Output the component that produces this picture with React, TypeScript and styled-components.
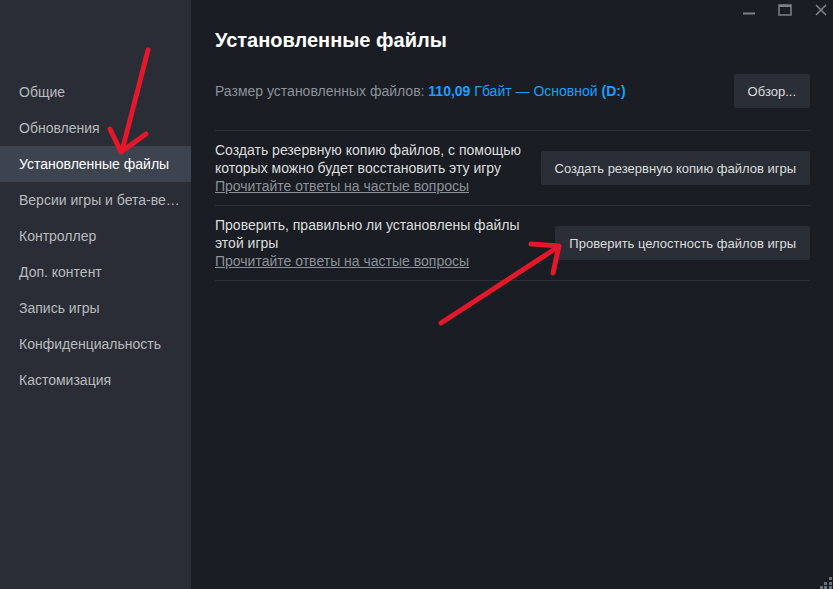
import React from 'react';
import styled, { createGlobalStyle } from 'styled-components';

const GlobalStyle = createGlobalStyle`
    html, body {
        margin: 0;
        padding: 0;
        background: #1a1d23;
    }
    body {
        font-family: "Liberation Sans", Arial, sans-serif;
    }
`;

const menuItems = [
    'Общие',
    'Обновления',
    'Установленные файлы',
    'Версии игры и бета-версии',
    'Контроллер',
    'Доп. контент',
    'Запись игры',
    'Конфиденциальность',
    'Кастомизация',
];

const App = () => {
    return (
        <Window>
            <GlobalStyle />
            <Sidebar>
                {menuItems.map((item) => (
                    <MenuItem key={item} active={item === 'Установленные файлы'}>
                        {item}
                    </MenuItem>
                ))}
            </Sidebar>

            <Main>
                <Title>Установленные файлы</Title>

                <SizeRow>
                    <SizeText>
                        Размер установленных файлов:{' '}
                        <Accent>
                            <b>110,09</b> Гбайт — Основной <b>(D:)</b>
                        </Accent>
                    </SizeText>
                    <Button>Обзор...</Button>
                </SizeRow>

                <Row>
                    <Description>
                        Создать резервную копию файлов, с помощью которых можно будет восстановить эту игру
                        <Link>Прочитайте ответы на частые вопросы</Link>
                    </Description>
                    <Button>Создать резервную копию файлов игры</Button>
                </Row>

                <Row>
                    <Description>
                        Проверить, правильно ли установлены файлы этой игры
                        <Link>Прочитайте ответы на частые вопросы</Link>
                    </Description>
                    <Button>Проверить целостность файлов игры</Button>
                </Row>
            </Main>

            <Controls>
                <svg width="14" height="14" viewBox="0 0 14 14">
                    <line x1="1" y1="10.5" x2="13" y2="10.5" stroke="#7b818a" strokeWidth="2" />
                </svg>
                <svg width="14" height="14" viewBox="0 0 14 14">
                    <rect x="1" y="2" width="12" height="10" fill="none" stroke="#7b818a" strokeWidth="1.5" />
                    <line x1="1" y1="3" x2="13" y2="3" stroke="#7b818a" strokeWidth="2" />
                </svg>
                <svg width="14" height="14" viewBox="0 0 14 14">
                    <path d="M2 2 L12 12 M12 2 L2 12" stroke="#7b818a" strokeWidth="1.6" />
                </svg>
            </Controls>

            <Grip>
                <svg width="12" height="12" viewBox="0 0 12 12">
                    <rect x="9" y="0" width="3" height="3" fill="#6b717a" />
                    <rect x="4" y="5" width="3" height="3" fill="#6b717a" />
                    <rect x="9" y="5" width="3" height="3" fill="#6b717a" />
                    <rect x="0" y="9" width="3" height="3" fill="#6b717a" />
                    <rect x="4" y="9" width="3" height="3" fill="#6b717a" />
                    <rect x="9" y="9" width="3" height="3" fill="#6b717a" />
                </svg>
            </Grip>

            <Annotations width="833" height="589" viewBox="0 0 833 589">
                <g stroke="#e4172b" strokeWidth="5" strokeLinecap="round" fill="none">
                    <path d="M148 50 L122 151" />
                    <path d="M110 129 L121 152 L146 134" strokeLinejoin="round" />
                    <path d="M441 323 L558 247" />
                    <path d="M531 244 L559 246 L553 273" strokeLinejoin="round" />
                </g>
            </Annotations>
        </Window>
    );
};

export default App;

const Window = styled.div`
    position: relative;
    display: flex;
    width: 833px;
    height: 589px;
    overflow: hidden;
    background-color: #1a1d23;
`;

const Sidebar = styled.div`
    width: 191px;
    flex-shrink: 0;
    padding-top: 74px;
    background-color: #2a2d35;
    box-sizing: border-box;
`;

const MenuItem = styled.div<{ active?: boolean }>`
    height: 36px;
    line-height: 36px;
    padding: 0 10px 0 19px;
    font-size: 14px;
    color: ${(p) => (p.active ? '#ffffff' : '#b8bcbf')};
    background-color: ${(p) => (p.active ? '#3d4450' : 'transparent')};
    white-space: nowrap;
    overflow: hidden;
    text-overflow: ellipsis;
`;

const Main = styled.div`
    flex: 1;
    padding: 29px 23px 0 24px;
    display: flex;
    flex-direction: column;
`;

const Title = styled.h1`
    margin: 0 0 22px;
    font-size: 20px;
    font-weight: bold;
    color: #ffffff;
`;

const SizeRow = styled.div`
    display: flex;
    align-items: center;
    justify-content: space-between;
    padding-bottom: 22px;
    border-bottom: 1px solid #2c3038;
`;

const SizeText = styled.div`
    font-size: 14px;
    color: #8b929a;
`;

const Accent = styled.span`
    color: #1a9fff;

    b {
        font-weight: bold;
    }
`;

const Row = styled.div`
    display: flex;
    align-items: center;
    justify-content: space-between;
    padding: 10px 0 10px;
    border-bottom: 1px solid #2c3038;
`;

const Description = styled.div`
    width: 320px;
    font-size: 14px;
    line-height: 18px;
    color: #dcdedf;
`;

const Link = styled.a`
    display: block;
    color: #8b929a;
    text-decoration: underline;
    cursor: pointer;
`;

const Button = styled.button`
    height: 34px;
    padding: 0 14px;
    background-color: #2a2e36;
    color: #dcdedf;
    border: none;
    border-radius: 2px;
    font-family: "Liberation Sans", Arial, sans-serif;
    font-size: 13px;
    cursor: pointer;
    white-space: nowrap;

    &:hover {
        background-color: #3d4450;
    }
`;

const Controls = styled.div`
    position: absolute;
    top: 3px;
    right: 5px;
    display: flex;
    gap: 22px;
`;

const Grip = styled.div`
    position: absolute;
    right: 1px;
    bottom: 0;
    line-height: 0;
`;

const Annotations = styled.svg`
    position: absolute;
    top: 0;
    left: 0;
    pointer-events: none;
`;
